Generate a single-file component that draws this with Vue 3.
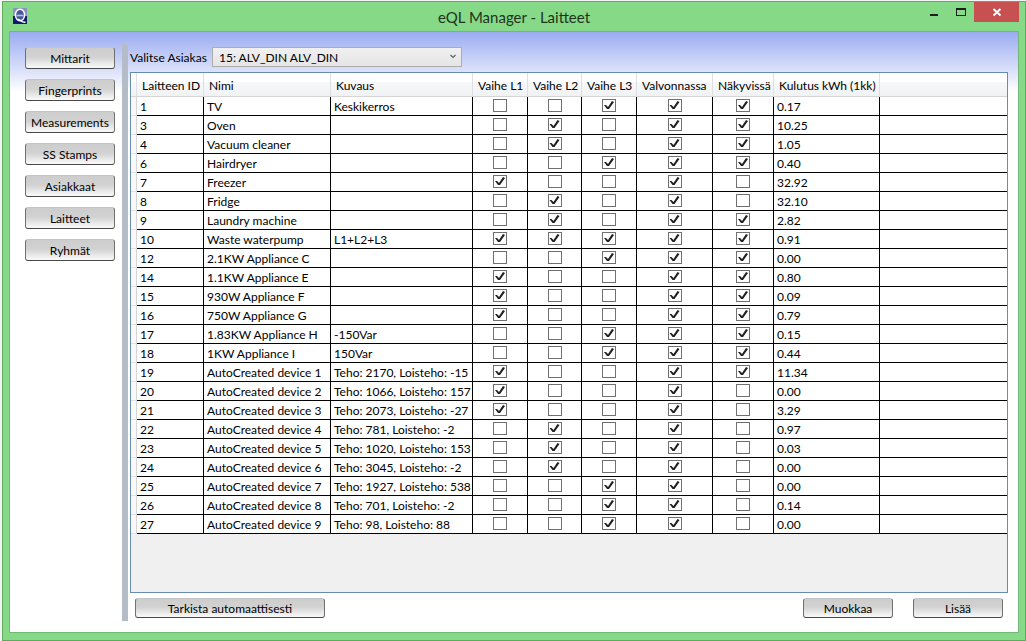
<script setup>
import { reactive, ref } from 'vue'

const navItems = ['Mittarit', 'Fingerprints', 'Measurements', 'SS Stamps', 'Asiakkaat', 'Laitteet', 'Ryhmät']
const customer = ref('15: ALV_DIN ALV_DIN')

const flagColumns = ['Vaihe L1', 'Vaihe L2', 'Vaihe L3', 'Valvonnassa', 'Näkyvissä']

// id, name, description, flags in the order of flagColumns, monthly kWh
const devices = reactive(
  [
    [1, 'TV', 'Keskikerros', '00111', '0.17'],
    [3, 'Oven', '', '01011', '10.25'],
    [4, 'Vacuum cleaner', '', '01011', '1.05'],
    [6, 'Hairdryer', '', '00111', '0.40'],
    [7, 'Freezer', '', '10010', '32.92'],
    [8, 'Fridge', '', '01010', '32.10'],
    [9, 'Laundry machine', '', '01011', '2.82'],
    [10, 'Waste waterpump', 'L1+L2+L3', '11111', '0.91'],
    [12, '2.1KW Appliance C', '', '00111', '0.00'],
    [14, '1.1KW Appliance E', '', '10011', '0.80'],
    [15, '930W Appliance F', '', '10011', '0.09'],
    [16, '750W Appliance G', '', '10011', '0.79'],
    [17, '1.83KW Appliance H', '-150Var', '00111', '0.15'],
    [18, '1KW Appliance I', '150Var', '00111', '0.44'],
    [19, 'AutoCreated device 1', 'Teho: 2170, Loisteho: -15', '10011', '11.34'],
    [20, 'AutoCreated device 2', 'Teho: 1066, Loisteho: 157', '10010', '0.00'],
    [21, 'AutoCreated device 3', 'Teho: 2073, Loisteho: -27', '10010', '3.29'],
    [22, 'AutoCreated device 4', 'Teho: 781, Loisteho: -2', '01010', '0.97'],
    [23, 'AutoCreated device 5', 'Teho: 1020, Loisteho: 153', '01010', '0.03'],
    [24, 'AutoCreated device 6', 'Teho: 3045, Loisteho: -2', '01010', '0.00'],
    [25, 'AutoCreated device 7', 'Teho: 1927, Loisteho: 538', '00110', '0.00'],
    [26, 'AutoCreated device 8', 'Teho: 701, Loisteho: -2', '00110', '0.14'],
    [27, 'AutoCreated device 9', 'Teho: 98, Loisteho: 88', '00110', '0.00'],
  ].map(([id, name, description, flags, usage]) => ({
    id,
    name,
    description,
    flags: [...flags].map((f) => f === '1'),
    usage,
  }))
)
</script>

<template>
  <div class="window">
    <header class="titlebar">
      <svg class="app-icon" viewBox="0 0 14 16" aria-hidden="true">
        <rect width="14" height="8" fill="#8c93c4" />
        <rect y="8" width="14" height="8" fill="#0f1c70" />
        <ellipse cx="7" cy="7" rx="4.6" ry="5.8" fill="#4a569c" stroke="#fff" stroke-width="1.5" />
        <path d="M3.5 7.5h7" stroke="#b8c0e6" stroke-width="1.6" />
        <path d="M5 11.500c2.500 0 3.500 3.500 7.500 2.800" fill="none" stroke="#fff" stroke-width="1.5" />
      </svg>
      <h1>eQL Manager - Laitteet</h1>
      <div class="controls">
        <button class="ctl" type="button" aria-label="Minimize">
          <svg width="10" height="10" viewBox="0 0 10 10"><path d="M1 7h8v2H1z" fill="#1e1e1e" /></svg>
        </button>
        <button class="ctl" type="button" aria-label="Maximize">
          <svg width="10" height="10" viewBox="0 0 10 10"><path d="M0 1h10v8H0zM1 3v5h8V3z" fill="#1e1e1e" fill-rule="evenodd" /></svg>
        </button>
        <button class="ctl close" type="button" aria-label="Close">
          <svg width="10" height="10" viewBox="0 0 10 10"><path d="M1.500 2l7 6.500M8.500 2l-7 6.500" stroke="#fff" stroke-width="1.900" /></svg>
        </button>
      </div>
    </header>

    <div class="client">
      <nav class="sidebar">
        <button v-for="item in navItems" :key="item" class="btn nav-btn" type="button">{{ item }}</button>
      </nav>
      <div class="splitter"></div>
      <main class="main">
        <div class="picker">
          <label for="customer">Valitse Asiakas</label>
          <div class="combo">
            <select id="customer" v-model="customer">
              <option>15: ALV_DIN ALV_DIN</option>
            </select>
            <svg class="chevron" width="6" height="5" viewBox="0 0 6 5"><path d="M.5 1L3 3.500 5.500 1" fill="none" stroke="#606060" stroke-width="1.200" /></svg>
          </div>
        </div>

        <div class="grid">
          <table>
            <colgroup>
              <col class="c-head" /><col class="c-id" /><col class="c-name" /><col class="c-desc" />
              <col class="c-l1" /><col class="c-l2" /><col class="c-l1" /><col class="c-watch" />
              <col class="c-seen" /><col class="c-use" /><col />
            </colgroup>
            <thead>
              <tr>
                <th></th>
                <th scope="col">Laitteen ID</th>
                <th scope="col">Nimi</th>
                <th scope="col">Kuvaus</th>
                <th v-for="c in flagColumns" :key="c" scope="col">{{ c }}</th>
                <th scope="col">Kulutus kWh (1kk)</th>
                <th class="rest"></th>
              </tr>
            </thead>
            <tbody>
              <tr v-for="d in devices" :key="d.id">
                <td class="row-head"></td>
                <td>{{ d.id }}</td>
                <td>{{ d.name }}</td>
                <td>{{ d.description }}</td>
                <td v-for="(c, i) in flagColumns" :key="c" class="flag">
                  <input v-model="d.flags[i]" type="checkbox" :aria-label="`${c}: ${d.name}`" />
                </td>
                <td>{{ d.usage }}</td>
                <td class="rest"></td>
              </tr>
            </tbody>
          </table>
        </div>

        <footer class="actions">
          <button class="btn auto" type="button">Tarkista automaattisesti</button>
          <button class="btn" type="button">Muokkaa</button>
          <button class="btn" type="button">Lisää</button>
        </footer>
      </main>
    </div>
  </div>
</template>

<style>
body {
  background: #f4f4f4;
}
</style>

<style scoped>
.window,
.window * {
  box-sizing: border-box;
}
.window {
  display: flex;
  flex-direction: column;
  min-height: calc(100vh - 1px);
  margin: 1px 0 0 2px;
  padding: 0 6px 7px;
  border: 1px solid #60ab60;
  background: #86d986;
  font-family: Lato, "Open Sans", sans-serif;
  font-size: 12px;
  color: #000;
}
button,
select,
input {
  margin: 0;
  font: inherit;
  color: inherit;
}
.titlebar {
  display: grid;
  grid-template-columns: 1fr auto 1fr;
  height: 29px;
}
.app-icon {
  width: 14px;
  height: 16px;
  margin: 6px 0 0 4px;
}
h1 {
  margin: 0;
  font-size: 15px;
  font-weight: 400;
  line-height: 30px;
  color: #1f331f;
}
.controls {
  display: flex;
  justify-content: flex-end;
}
.ctl {
  display: flex;
  align-items: center;
  justify-content: center;
  width: 27px;
  height: 20px;
  padding: 0;
  border: 0;
  background: none;
}
.close {
  width: 45px;
  background: #c75050;
}
.client {
  display: flex;
  flex: 1;
  border: 1px solid #74b878;
  padding: 12px 10px 11px 15px;
  background: linear-gradient(#9aabf1, #fff 60px) #fff;
}
.sidebar {
  display: flex;
  flex-direction: column;
  gap: 10px;
  width: 90px;
  padding-top: 3px;
}
.btn {
  width: 90px;
  height: 20px;
  padding: 2px 0 0;
  border: 1px solid #707070;
  border-top-color: #c4c4c4;
  border-bottom-color: #484848;
  border-radius: 3px;
  background: linear-gradient(#cdcdcd, #d2d2d2 45%, #fafafa);
  line-height: 16px;
}
.nav-btn {
  height: 22px;
  line-height: 18px;
}
.splitter {
  width: 6px;
  margin: 0 2px 0 7px;
  background: #b4bdc7;
}
.main {
  display: flex;
  flex: 1;
  flex-direction: column;
  min-width: 0;
}
.picker {
  display: flex;
  align-items: center;
  gap: 5px;
  height: 20px;
  margin: 3px 0 5px;
}
.picker label {
  flex: none;
  width: 77px;
  white-space: nowrap;
}
.combo {
  position: relative;
  width: 250px;
}
select {
  display: block;
  width: 100%;
  height: 20px;
  padding: 0 20px 0 6px;
  border: 1px solid #acacac;
  border-radius: 0;
  appearance: none;
  background: linear-gradient(#f0f0f0, #e5e5e5);
}
.chevron {
  position: absolute;
  top: 7px;
  right: 6px;
  pointer-events: none;
}
.grid {
  flex: 1;
  border: 1px solid #688caf;
  background: #f0f0f0;
}
table {
  width: 100%;
  table-layout: fixed;
  border-collapse: separate;
  border-spacing: 0;
}
.c-head { width: 6px; }
.c-id { width: 67px; }
.c-name { width: 127px; }
.c-desc { width: 142px; }
.c-l1 { width: 55px; }
.c-l2 { width: 54px; }
.c-watch { width: 76px; }
.c-seen { width: 61px; }
.c-use { width: 106px; }
th {
  height: 24px;
  padding: 2px 0 0 5px;
  border-right: 1px solid #dfdfe1;
  border-bottom: 1px solid #d5d5d5;
  background: linear-gradient(#fff 40%, #f7f8fa 40%, #f1f2f4);
  font-weight: 400;
  line-height: 20px;
  text-align: left;
  white-space: nowrap;
}
td {
  height: 19px;
  padding: 2px 0 0 3px;
  border-right: 1px solid #000;
  border-bottom: 1px solid #000;
  background: #fff;
  line-height: 16px;
  white-space: nowrap;
}
.row-head {
  padding: 0;
  border-right-color: #d5d5d5;
  border-bottom-color: #e0e0e0;
  background: #f8f8f9;
}
th:first-child {
  padding: 0;
}
.rest {
  border-right: 0;
}
.flag {
  padding: 0;
  line-height: 0;
  text-align: center;
  vertical-align: top;
}
.flag input {
  position: relative;
  width: 14px;
  height: 13px;
  margin-top: 2px;
  border: 1px solid #707070;
  appearance: none;
  background: #fff;
}
.flag input:checked::before {
  content: "";
  display: block;
  width: 12px;
  height: 11px;
  background: #212121;
  clip-path: polygon(1px 5px, 3px 5px, 5px 7px, 9px 1px, 11px 2px, 6px 9px, 4px 9px);
}
.actions {
  display: flex;
  gap: 20px;
  padding: 5px 5px 3px;
}
.auto {
  width: 190px;
  margin-right: auto;
}
</style>
